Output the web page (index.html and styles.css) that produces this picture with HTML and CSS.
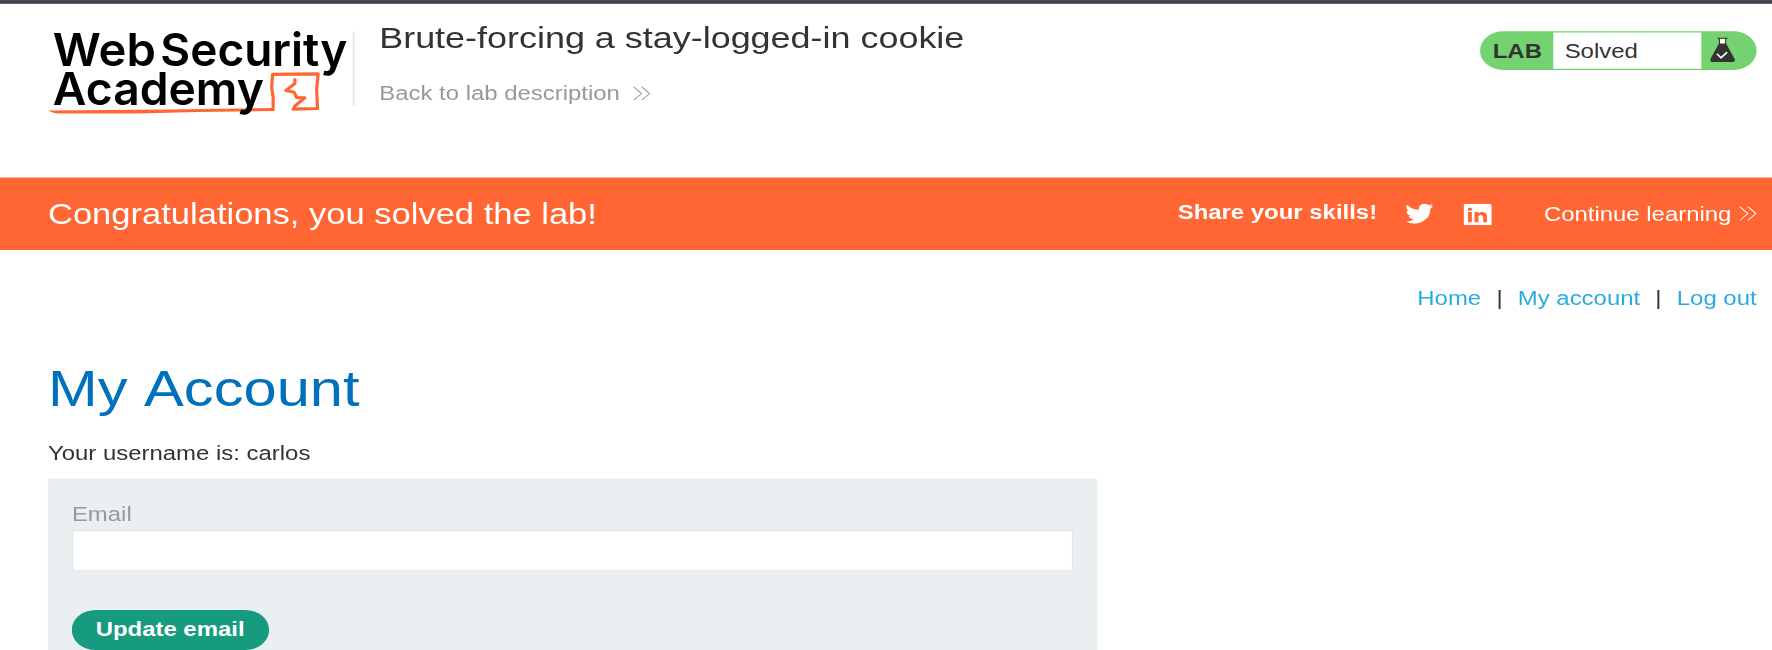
FILE: index.html
```html
<!DOCTYPE html>
<html lang="en">
<head>
<meta charset="utf-8">
<title>Brute-forcing a stay-logged-in cookie</title>
<link rel="stylesheet" href="styles.css">
</head>
<body>
<div class="page">
  <div class="topbar"></div>
  <header class="header">
    <svg class="logo" viewBox="0 0 300 90" preserveAspectRatio="none">
      <g class="logo-text">
        <text x="5" y="38" textLength="103" lengthAdjust="spacingAndGlyphs">Web</text>
        <text x="112.500" y="38" textLength="187" lengthAdjust="spacingAndGlyphs">Security</text>
      </g>
      <path fill="none" stroke="#ff6633" stroke-width="3.2" stroke-linecap="round" stroke-linejoin="round" d="M225.300 82V70L223.800 60 224.700 46.800 270.300 46.300 268.800 62 269.700 81 245.300 81.700 247 78.500 257 70.300 248.700 70 246.300 64.700 238 63 247 56V52"/>
      <path fill="#ff6633" d="M1 83L120 82 226 80.500V83.500L150 84.500 90 86 10 86Q3 85 1 83Z"/>
      <g class="logo-text"><text x="5" y="77.500" textLength="211" lengthAdjust="spacingAndGlyphs">Academy</text></g>
    </svg>
    <div class="title-block">
      <h2 class="lab-title">Brute-forcing a stay-logged-in cookie</h2>
      <a class="back-link">Back to lab description
        <svg class="chevrons" viewBox="0 0 18 15" preserveAspectRatio="none"><path d="M1 .5L9 7.500 1 14.500M9 .5L17 7.500 9 14.500"/></svg>
      </a>
    </div>
    <div class="status">
      <span class="status-lab">LAB</span>
      <span class="status-text">Solved</span>
      <svg class="flask" viewBox="0 0 24 24" preserveAspectRatio="none">
        <path fill="#fff" d="M9 1h6v6H9z"/>
        <path fill="#333332" d="M7 0h10v1.300h-1.500V6h-1V1.300H9.500V6H8.500V1.300H7zM8.500 6h7L24 21.500Q24.600 24 22 24H2Q-.6 24 0 21.500z"/>
        <path fill="none" stroke="#fff" stroke-width="1.700" d="M6.500 16l4 4 6-5.500"/>
      </svg>
    </div>
  </header>
  <section class="banner">
    <h4 class="congrats">Congratulations, you solved the lab!</h4>
    <span class="share">Share your skills!</span>
    <svg class="twitter" viewBox="1 3 22 18" preserveAspectRatio="none"><path fill="#fff" d="M23 5.100a9 9 0 0 1-2.600.7 4.500 4.500 0 0 0 2-2.500 9 9 0 0 1-2.900 1.100 4.500 4.500 0 0 0-7.700 4.100A12.800 12.800 0 0 1 2.500 3.800a4.500 4.500 0 0 0 1.400 6 4.500 4.500 0 0 1-2-.6 4.500 4.500 0 0 0 3.600 4.500 4.500 4.500 0 0 1-2 .1 4.500 4.500 0 0 0 4.200 3.100A9 9 0 0 1 1 18.800 12.800 12.800 0 0 0 20.700 7.400 9 9 0 0 0 23 5.100z"/></svg>
    <svg class="linkedin" viewBox="0 0 24 24" preserveAspectRatio="none"><path fill="#fff" fill-rule="evenodd" d="M2 0h20Q24 0 24 2v20Q24 24 22 24H2Q0 24 0 22V2Q0 0 2 0zM3.800 9v11h3.300V9zM5.400 4a1.900 1.900 0 1 0 0 3.800 1.900 1.900 0 0 0 0-3.800zM9.400 9v11h3.300v-5.500c0-3.300 4.100-3.300 4.100 0V20h3.300v-6.500c0-5.200-5.600-5.700-7.400-3V9z"/></svg>
    <a class="continue">Continue learning
      <svg class="chevrons" viewBox="0 0 18 15" preserveAspectRatio="none"><path d="M1 .5L9 7.500 1 14.500M9 .5L17 7.500 9 14.500"/></svg>
    </a>
  </section>
  <nav class="nav"><a>Home</a><span>|</span><a>My account</a><span>|</span><a>Log out</a></nav>
  <main class="content">
    <h1 class="heading">My Account</h1>
    <p class="username">Your username is: carlos</p>
    <form class="form">
      <label class="label" for="email">Email</label>
      <input class="input" id="email" type="email">
      <button class="button" type="button">Update email</button>
    </form>
  </main>
</div>
</body>
</html>
```
FILE: styles.css
```css
* { box-sizing: border-box; }

html, body { margin: 0; height: 650px; overflow: hidden; background: #fff; }

/* Layout is in base units, magnified to fill the window. */
.page {
  width: 1186px;
  height: 520px;
  overflow: hidden;
  transform: scale(1.495, 1.25);
  transform-origin: 0 0;
  font: 16px/20px "Liberation Sans", Arial, sans-serif;
  color: #333332;
}

h1, h2, h4, p { margin: 0; font-weight: 400; }

.topbar { height: 3.2px; background: linear-gradient(#454850 50%, #2d2f36); }

.header {
  display: flex;
  align-items: flex-start;
  height: 138.4px;
  padding: 0 11px 0 32.1px;
}
.logo { width: 200.7px; height: 72px; margin-top: 19.2px; overflow: visible; }
.logo-text { font: 600 45.500px Inter, "Open Sans", sans-serif; fill: #000; }
.title-block {
  margin: 21.6px 0 0 3.700px;
  height: 60.4px;
  padding-left: 16.200px;
  border-left: 0.8px solid #e2e2e2;
}
.lab-title { margin-top: -9.7px; font-size: 24.040px; line-height: 30px; }
.back-link { display: flex; align-items: center; gap: 8.5px; margin-top: 20px; color: #999; }
.chevrons { width: 12.2px; height: 11.8px; flex: none; }
.chevrons path { fill: none; stroke: currentColor; stroke-width: 1; }
.back-link .chevrons { margin-top: -1px; }

.status {
  display: flex;
  align-items: center;
  width: 185px;
  height: 31.2px;
  margin: 21.4px 0 0 auto;
  border: 1px solid #74d370;
  border-radius: 16px;
  background: #74d370;
}
.status-lab { width: 48.2px; padding: 1px 0 0 7.500px; font-weight: 700; }
.status-text { width: 98.5px; height: 100%; padding: 5.200px 0 0 7.400px; background: #fff; }
.flask { width: 16.400px; height: 19.500px; margin-left: 6.800px; }

.banner {
  display: flex;
  align-items: center;
  height: 58.400px;
  padding: 0 11px 0 32.100px;
  background: #ff6633;
  color: #fff;
}
.congrats { font-size: 23.100px; line-height: 30px; }
.share { margin-left: auto; padding-bottom: 2.200px; font-weight: 700; }
.twitter { width: 18.700px; height: 16px; margin-left: 19px; }
.linkedin { width: 18.700px; height: 17.800px; margin: 1.600px 0 0 20.500px; }
.continue { display: flex; align-items: center; gap: 4.700px; margin-left: 34.700px; padding-top: 2px; }
.continue .chevrons { margin-top: -1px; }

.nav { display: flex; justify-content: flex-end; height: 76px; padding: 29.300px 11px 0; }
.nav a { color: #29abe2; }
.nav span { margin: 0 10.200px; }

.content { padding-left: 32.100px; }
.heading { margin-top: 11px; font-size: 39.900px; line-height: 48px; font-kerning: none; color: #0071bc; }
.username { margin-top: 17.800px; }
.form {
  display: flex;
  flex-direction: column;
  align-items: flex-start;
  width: 701.600px;
  height: 150px;
  margin-top: 10.600px;
  padding: 18.300px 16px 0;
  background: #eaeff2;
}
.label { color: #999; }
.input { width: 100%; height: 32.800px; margin: 2.100px 0 0; border: 1px solid #e4e6e7; background: #fff; }
.button {
  width: 132.400px;
  height: 32px;
  margin-top: 31.300px;
  padding: 0 1px 0 0;
  border: 0;
  border-radius: 16px;
  background: #169b7f;
  color: #fff;
  font: 700 16px/32px "Liberation Sans", Arial, sans-serif;
}
```
